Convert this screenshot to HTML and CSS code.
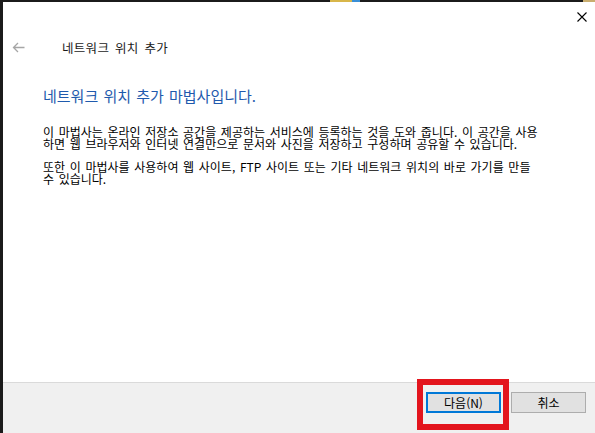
FILE: index.html
```html
<!DOCTYPE html>
<html lang="ko">
<head>
<meta charset="utf-8">
<title>네트워크 위치 추가</title>
<link rel="stylesheet" href="styles.css">
</head>
<body>
<div class="screen">
  <div class="taskbar-bits">
    <span class="bit bit-yellow"></span><span class="bit bit-blue"></span>
    <span class="spacer"></span>
    <span class="bit bit-tan"></span>
  </div>
  <div class="window">
    <div class="topbar">
      <svg class="close" width="10" height="10" viewBox="0 0 10 10"><path d="M0.5 0.5L9.5 9.5M9.5 0.5L0.5 9.5" stroke="#000" stroke-width="1.1" fill="none"/></svg>
    </div>
    <div class="nav">
      <svg class="back" width="13" height="11" viewBox="0 0 13 11"><path d="M12.5 5.5H1.5M6 1L1.5 5.5L6 10" stroke="#a6a6a6" stroke-width="1.3" fill="none"/></svg>
      <span class="nav-title">네트워크 위치 추가</span>
    </div>
    <div class="content">
      <h1 class="heading">네트워크 위치 추가 마법사입니다.</h1>
      <p class="para">이 마법사는 온라인 저장소 공간을 제공하는 서비스에 등록하는 것을 도와 줍니다. 이 공간을 사용<br>하면 웹 브라우저와 인터넷 연결만으로 문서와 사진을 저장하고 구성하며 공유할 수 있습니다.</p>
      <p class="para para-gap">또한 이 마법사를 사용하여 웹 사이트, FTP 사이트 또는 기타 네트워크 위치의 바로 가기를 만들<br>수 있습니다.</p>
    </div>
    <div class="footer">
      <button class="btn btn-default">다음(N)</button>
      <button class="btn">취소</button>
    </div>
  </div>
  <div class="highlight"></div>
</div>
</body>
</html>
```

FILE: styles.css
```css
html, body {
  margin: 0;
  padding: 0;
  background: #1b1b1b;
}

.screen {
  position: relative;
  width: 595px;
  height: 433px;
  box-sizing: border-box;
  padding: 2px 0 0 3px;
  background: #1b1b1b;
  display: flex;
  flex-direction: column;
  overflow: hidden;
  font-family: "Noto Sans CJK KR", "Noto Sans", sans-serif;
}

.taskbar-bits {
  position: absolute;
  top: 0;
  left: 0;
  right: 0;
  height: 2px;
  display: flex;
}

.bit { display: block; height: 2px; }
.bit-yellow { margin-left: 330px; width: 22px; background: #d8b64a; }
.bit-blue { width: 8px; background: #3a8fd6; }
.spacer { flex: 1; }
.bit-tan { width: 12px; background: #c9ad6e; }

.window {
  flex: 1;
  background: #ffffff;
  display: flex;
  flex-direction: column;
}

.topbar {
  height: 32px;
  display: flex;
  justify-content: flex-end;
  align-items: flex-start;
  padding-right: 8px;
}

.close {
  margin-top: 10px;
}

.nav {
  height: 26px;
  display: flex;
  align-items: center;
  padding-left: 9px;
}

.back {
  margin-right: 37px;
}

.nav-title {
  font-size: 12.5px;
  color: #1a1a1a;
  letter-spacing: 0.3px;
  word-spacing: 2px;
}

.content {
  padding-left: 40px;
}

.heading {
  margin: 26px 0 0 0;
  font-size: 15px;
  line-height: 20px;
  font-weight: normal;
  color: #1f5aad;
  word-spacing: 1px;
}

.para {
  margin: 20px 0 0 0;
  font-size: 12px;
  line-height: 12px;
  color: #000;
  word-spacing: 1.3px;
}

.para-gap {
  margin-top: 11px;
}

.footer {
  margin-top: auto;
  height: 41px;
  border-top: 1px solid #dadada;
  background: #f0f0f0;
  display: flex;
  justify-content: flex-end;
  align-items: flex-start;
  gap: 10px;
  padding: 9px 9px 0 0;
}

.btn {
  width: 75px;
  height: 21px;
  box-sizing: border-box;
  margin: 0;
  padding: 0;
  border: 1px solid #adadad;
  background: #e1e1e1;
  font-family: "Noto Sans CJK KR", "Noto Sans", sans-serif;
  font-size: 12px;
  color: #000;
  line-height: 17px;
}

.btn-default {
  border: 2px solid #0078d7;
}

.highlight {
  position: absolute;
  left: 417px;
  top: 379px;
  width: 92px;
  height: 51px;
  box-sizing: border-box;
  border: 6px solid #e3151d;
}
```
